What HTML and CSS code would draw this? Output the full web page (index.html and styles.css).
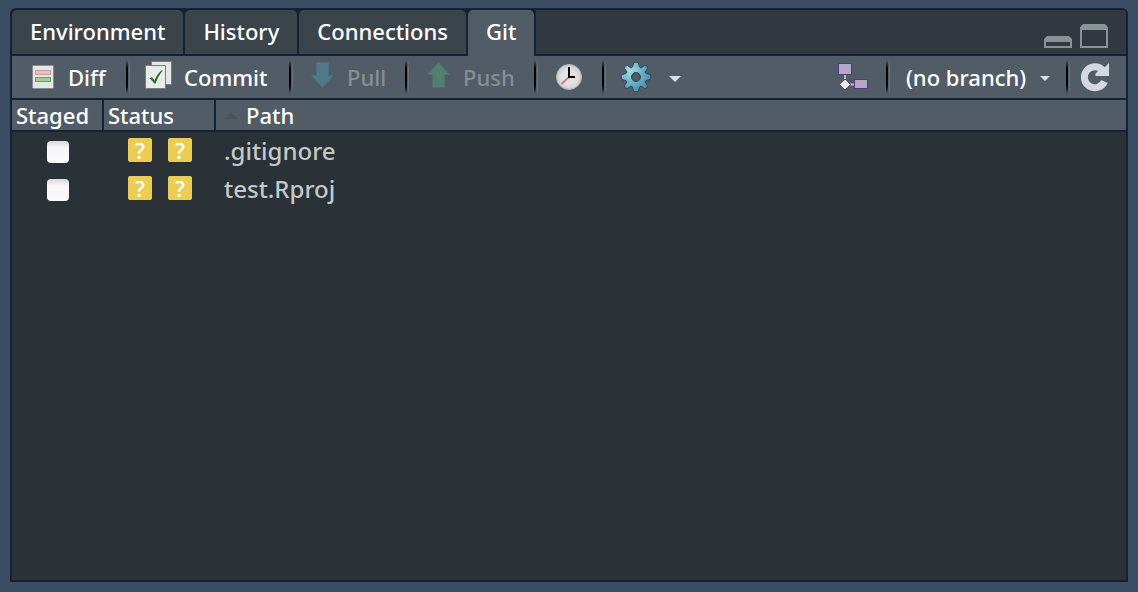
FILE: index.html
```
<!DOCTYPE html>
<html lang="en">
<head>
<meta charset="utf-8">
<title>Git</title>
<link rel="stylesheet" href="styles.css">
</head>
<body>
<main class="panel">
  <header class="tabstrip">
    <nav class="tabs" role="tablist">
      <button class="tab" role="tab">Environment</button>
      <button class="tab" role="tab">History</button>
      <button class="tab" role="tab">Connections</button>
      <button class="tab active" role="tab" aria-selected="true">Git</button>
    </nav>
    <div class="window-controls">
      <button class="icon-button" aria-label="Minimize"><svg width="28" height="24"><path fill="#899294" fill-rule="evenodd" d="M0 24V15l3-3h22l3 3v9zM2 18v4h24v-4z"/></svg></button>
      <button class="icon-button" aria-label="Maximize"><svg width="28" height="24"><path fill="#899294" fill-rule="evenodd" d="M0 24V3l3-3h22l3 3v21zM2 6v16h24V6z"/></svg></button>
    </div>
  </header>
  <div class="toolbar" role="toolbar">
    <button class="tool diff"><svg class="icon" width="22" height="24"><rect x="0.5" y="0.5" width="21" height="23" rx="1" fill="#e5e6e6" stroke="#87898e"/><rect x="3.5" y="5.5" width="15" height="4" fill="#dfc4c4" stroke="#ce9797"/><rect x="3.5" y="12.5" width="15" height="4" fill="#a1cb9f" stroke="#62a566"/></svg>Diff</button>
    <span class="separator"></span>
    <button class="tool commit"><svg class="icon" width="27" height="28"><path d="M6.500.5h20v23h-20z" fill="#e5e6e6" stroke="#747b83"/><path d="M.5 4.500h20v23H.5z" fill="#e9eaea" stroke="#747b83"/><path d="M4.500 17.500l2.500-1.500 2.500 3.500c1.500-4 4-8 7.500-10.500l.5 1c-3.500 4-5 8-7 12.500H9c-1-2-2.500-4-4.500-5z" fill="#2c7020"/></svg>Commit</button>
    <span class="separator"></span>
    <button class="tool pull" disabled><svg class="icon" width="23" height="26"><path d="M5.500.5h12v13h5L11.500 25.500.5 13.500h5z" fill="#52798a" stroke="#496e7e"/></svg>Pull</button>
    <span class="separator"></span>
    <button class="tool push" disabled><svg class="icon" width="23" height="26"><path d="M5.500 25.500h12v-13h5L11.500.5.5 12.500h5z" fill="#527f72" stroke="#497467"/></svg>Push</button>
    <span class="separator"></span>
    <button class="tool history" aria-label="History"><svg width="26" height="26"><defs><radialGradient id="clock"><stop offset=".6" stop-color="#e2e2e2"/><stop offset="1" stop-color="#cbcccd"/></radialGradient></defs><circle cx="13" cy="13" r="12.500" fill="url(#clock)" stroke="#b1b4b7"/><path d="M13 13l-7.500 7" stroke="#d77a80" stroke-width="2"/><path d="M13 3v10h6" fill="none" stroke="#000" stroke-width="2"/></svg></button>
    <span class="separator"></span>
    <button class="tool more" aria-label="More"><svg class="gear" width="32" height="32" viewBox="-16 -16 32 32"><defs><radialGradient id="gear" cx=".3" cy=".3" r=".8"><stop offset="0" stop-color="#a2dde5"/><stop offset=".5" stop-color="#69b2cc"/><stop offset="1" stop-color="#478ab0"/></radialGradient></defs><path fill="url(#gear)" fill-rule="evenodd" stroke="#344854" stroke-width="1" stroke-linejoin="round" d="M-3.500-10L-2.500-14Q0-16 2.500-14L3.500-10 5-9 8.500-11.500Q12-12 11.500-8.500L9-5 10-3.500 14-2.500Q16 0 14 2.500L10 3.500 9 5 11.500 8.500Q12 12 8.500 11.500L5 9 3.500 10 2.500 14Q0 16-2.500 14L-3.500 10-5 9-8.500 11.500Q-12 12-11.500 8.500L-9 5-10 3.500-14 2.500Q-16 0-14-2.500L-10-3.500-9-5-11.500-8.500Q-12-12-8.500-11.500L-5-9zM4.500 0a4.500 4.500 0 1 0-9 0a4.500 4.500 0 1 0 9 0z"/><circle r="4" fill="#525c66" stroke="#3c5463" stroke-width="1.500"/></svg><svg class="caret" width="12" height="6"><path d="M0 0h12L6 6z" fill="#dcdddd"/></svg></button>
    <span class="spacer"></span>
    <button class="tool new-branch" aria-label="New branch"><svg width="30" height="28"><path d="M7 12v5M12 21.500h5" stroke="#bbb9c5" stroke-width="2"/><path d="M.5.5h13v11H.5zM16.500 16.500h13v9h-13z" fill="#b5a8c5" stroke="#5b3788"/><path d="M7 16l5.500 5.500L7 27l-5.500-5.500z" fill="#eceaee" stroke="#5b4770"/></svg></button>
    <span class="separator"></span>
    <button class="tool branch">(no branch)<svg class="caret" width="12" height="6"><path d="M1 0h10L6 5z" fill="#dcdddd"/></svg></button>
    <span class="separator"></span>
    <button class="tool refresh" aria-label="Refresh"><svg width="28" height="30"><path d="M23.500 19.500A10.500 10.500 0 1 1 21.500 8" fill="none" stroke="#d5d8df" stroke-width="7"/><path d="M28 1v13H14.500V11.500L19 7l5-2z" fill="#d5d8df"/></svg></button>
  </div>
  <table class="files">
    <colgroup><col class="col-staged"><col class="col-status"><col></colgroup>
    <thead>
      <tr><th>Staged</th><th>Status</th><th class="path-head"><svg class="sort" width="14" height="7"><path d="M0 7L7 0l7 7z" fill="#4c545a"/></svg>Path</th></tr>
    </thead>
    <tbody>
      <tr><td class="staged"><input type="checkbox" aria-label="Stage .gitignore"></td><td><div class="status"><span class="badge">?</span><span class="badge">?</span></div></td><td class="path">.gitignore</td></tr>
      <tr><td class="staged"><input type="checkbox" aria-label="Stage test.Rproj"></td><td><div class="status"><span class="badge">?</span><span class="badge">?</span></div></td><td class="path">test.Rproj</td></tr>
    </tbody>
  </table>
</main>
</body>
</html>
```
FILE: styles.css
```
* { box-sizing: border-box; }

body {
  display: flex;
  min-height: 100vh;
  margin: 0;
  padding: 8px 10px 10px;
  background: #3a4d63;
  color: #fff;
  font: 500 22px/30px "Noto Sans", "Open Sans", sans-serif;
}

button {
  margin: 0;
  padding: 0;
  border: 0;
  background: none;
  color: inherit;
  font: inherit;
}

svg { display: block; flex: none; }

.panel {
  flex: 1;
  min-width: 0;
  border: 2px solid #142235;
  border-radius: 6px 6px 0 0;
  background: #2a3238;
}

.tabstrip {
  display: flex;
  justify-content: space-between;
  height: 46px;
  background: #31383f;
  border-bottom: 2px solid #142235;
  border-radius: 4px 4px 0 0;
}

.tabs { display: flex; background: #142235; gap: 2px; padding-right: 2px; height: 44px; }

.tab {
  height: 44px;
  padding: 0 18px 2px;
  background: #3c444b;
  border-radius: 5px 5px 0 0;
}

.tab.active { height: 46px; padding-bottom: 4px; background: #525c66; }

.window-controls { display: flex; gap: 8px; padding: 14px 18px 0 0; }
.icon-button { height: 24px; }

.toolbar {
  display: flex;
  align-items: center;
  height: 44px;
  background: #525c66;
  border-bottom: 2px solid #142235;
}

.tool { display: flex; align-items: center; height: 42px; flex: none; }
.tool:disabled { color: #858e93; }
.spacer { flex: 1; }

.separator {
  width: 4px;
  height: 34px;
  flex: none;
  background:
    linear-gradient(#525c66, transparent 25%, transparent 75%, #525c66),
    linear-gradient(90deg, #000 2px, #525c66 2px, #525c66 3px, #6b747c 3px);
}

.diff { width: 114px; padding-left: 20px; gap: 14px; }
.commit { width: 159px; padding-left: 15px; gap: 12px; }
.commit .icon { margin-bottom: 4px; }
.pull { width: 112px; padding-left: 18px; gap: 13px; }
.push { width: 125px; padding-left: 18px; gap: 13px; }
.pull .icon, .push .icon { margin-bottom: 4px; }
.history { width: 64px; padding-left: 18px; }
.more { padding-left: 14px; gap: 17px; }
.new-branch { width: 48px; }
.branch { width: 176px; padding-left: 16px; gap: 13px; }
.refresh { width: 56px; padding-left: 11px; }
.caret { margin-top: 4px; }

.files {
  width: 100%;
  border-collapse: separate;
  border-spacing: 0;
  table-layout: fixed;
}

.col-staged { width: 90px; }
.col-status { width: 112px; }
.files th {
  height: 32px;
  padding: 0 4px;
  background: #525c66;
  border-bottom: 2px solid #142235;
  font-weight: 500;
  text-align: left;
}
.files th + th { border-left: 2px solid #142235; }
.files .path-head { padding-left: 8px; }
.sort { display: inline-block; margin-right: 8px; vertical-align: 5px; }
.files td { height: 38px; padding: 0; }
.files .staged { padding-left: 2px; }

.staged input {
  display: block;
  width: 22px;
  height: 22px;
  margin: 2px auto 0;
  appearance: none;
  border-radius: 4px;
  background: linear-gradient(#d9d9dc, #f6f6f8 30%, #fafafc);
}

.status { display: flex; gap: 16px; padding: 0 0 2px 26px; }

.badge {
  width: 24px;
  height: 24px;
  border-radius: 2px;
  background: #ebcc55;
  line-height: 24px;
  text-align: center;
}

.files .path { padding-left: 10px; color: #c5c8c6; font-size: 24px; }
```
